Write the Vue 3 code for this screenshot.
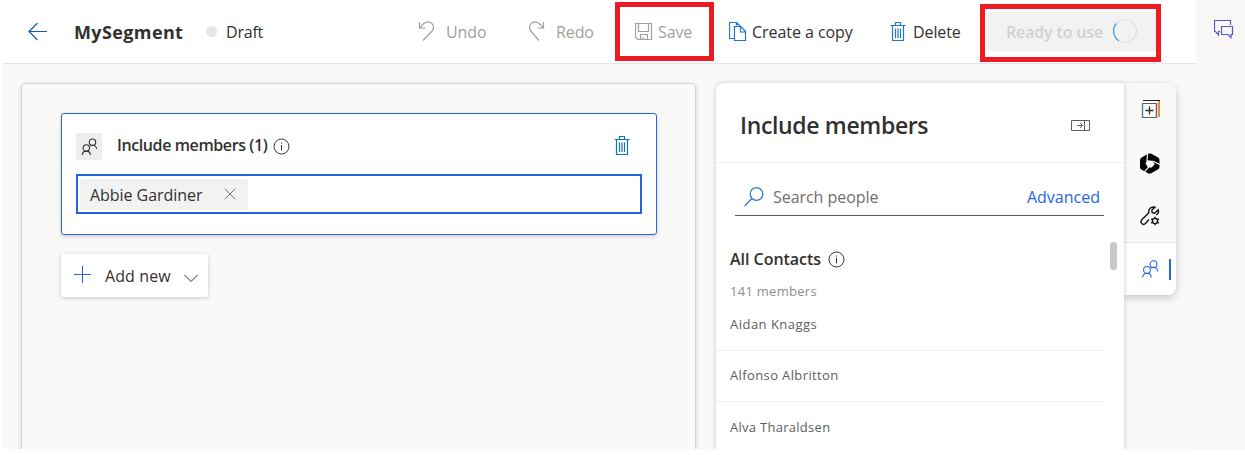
<script setup>
const contacts = ['Aidan Knaggs', 'Alfonso Albritton', 'Alva Tharaldsen']
</script>

<template>
  <div class="app">
    <div class="main">
      <header class="bar">
        <svg class="back" width="20" height="18" viewBox="0 0 20 18"><path d="M19 8.500H1M9.500 0 1 8.500l8.500 8.500" /></svg>
        <h1 class="t title">MySegment</h1>
        <span class="dot"></span>
        <span class="t draft">Draft</span>
        <button class="cmd undo off">
          <svg width="17" height="21" viewBox="0 0 17 21"><path d="M1.500 1v6h6M1.800 6.700 5 3.200C8.200.2 12 .3 14 2.700c2 2.300 1.900 5.300-.3 7.800L5 19.500" /></svg>
          <span class="t">Undo</span>
        </button>
        <button class="cmd redo off">
          <svg width="17" height="21" viewBox="0 0 17 21"><path d="M15.500 1v6h-6M15.200 6.700 12 3.200C8.800.2 5 .3 3 2.700c-2 2.300-1.900 5.300.3 7.800l7.700 9" /></svg>
          <span class="t">Redo</span>
        </button>
        <div class="mark save">
          <button class="cmd off">
            <svg width="18" height="18" viewBox="0 0 18 18"><path d="M.5.500h16v16H3L.5 14zM3.500.500v8h10v-8M5.500 16.500v-5h7v5M8 16.500v-2.500" /></svg>
            <span class="t">Save</span>
          </button>
        </div>
        <button class="cmd copy">
          <svg width="18" height="20" viewBox="0 0 18 20"><path d="M5.500 16.500h-5v-16h7l4 4M7.500.500v3M5.500 4.500h6.500l4.500 5v9h-11zM11.500 4.500v5.500h5" /></svg>
          <span class="t">Create a copy</span>
        </button>
        <button class="cmd del">
          <svg width="16" height="20" viewBox="0 0 16 20"><path d="M.5 3.500h15M5.500 3V.5h5V3M2.500 4v14.500h11V4M5.500 6.500v9.500M8 6.500v9.500M10.500 6.500v9.500" /></svg>
          <span class="t">Delete</span>
        </button>
        <div class="mark ready">
          <button class="readybtn">
            <span class="t">Ready to use</span>
            <svg width="26" height="26" viewBox="0 0 26 26"><circle cx="13" cy="13" r="11.500" stroke="#cfe3f5" /><path d="M4.200 5.700A11.500 11.500 0 0 0 6.800 22.700" stroke="#3a96dd" /></svg>
          </button>
        </div>
      </header>

      <div class="body">
        <section class="canvas">
          <div class="card">
            <div class="cardhead">
              <span class="people">
                <svg width="17" height="18" viewBox="0 0 17 18"><circle cx="11.500" cy="4.200" r="3.200" /><circle cx="5.300" cy="9.900" r="3.200" /><path d="M1.200 17c.2-2.600 1.700-3.900 4.100-3.900s3.900 1.300 4.100 3.900M9.200 7.900c2.600-1.500 5.900-.4 6.500 3" /></svg>
              </span>
              <span class="t heading">Include members (1)</span>
              <svg class="info" width="17" height="17" viewBox="0 0 17 17"><circle cx="8.500" cy="8.500" r="7.500" /><path d="M8.500 7v5.500M8.500 4.500v1.200" /></svg>
              <svg class="trash" width="16" height="20" viewBox="0 0 16 20"><path d="M.5 3.500h15M5.500 3V.5h5V3M2.500 4v14.500h11V4M5.500 6.500v9.500M8 6.500v9.500M10.500 6.500v9.500" /></svg>
            </div>
            <div class="field">
              <span class="chip">
                <span class="t">Abbie Gardiner</span>
                <svg width="12" height="12" viewBox="0 0 12 12"><path d="m.7.7 10.600 10.600M11.300.7.700 11.300" /></svg>
              </span>
            </div>
          </div>
          <button class="add">
            <svg class="plus" width="18" height="18" viewBox="0 0 18 18"><path d="M8.500 0v17M0 8.500h17" /></svg>
            <span class="t">Add new</span>
            <svg class="chev" width="14" height="9" viewBox="0 0 14 9"><path d="m.5 1 6.500 6.500L13.500 1" /></svg>
          </button>
        </section>

        <section class="panel">
          <div class="panelhead">
            <h2 class="t">Include members</h2>
            <svg width="20" height="12" viewBox="0 0 20 12"><path d="M.5.500h18v10H.5zM13.500.500v10M6 5.500h5M9 3l2.500 2.500L9 8" /></svg>
          </div>
          <div class="search">
            <svg width="20" height="20" viewBox="0 0 20 20"><circle cx="12.500" cy="7" r="6.300" /><path d="M8 11.500.6 19" /></svg>
            <span class="t ph">Search people</span>
            <a class="t adv">Advanced</a>
          </div>
          <div class="list">
            <div class="group">
              <span class="t">All Contacts</span>
              <svg class="info" width="17" height="17" viewBox="0 0 17 17"><circle cx="8.500" cy="8.500" r="7.500" /><path d="M8.500 7v5.500M8.500 4.500v1.200" /></svg>
              <i class="thumb"></i>
            </div>
            <div class="t count">141 members</div>
            <div v-for="(c, i) in contacts" :key="c" class="row" :class="'n' + i"><span class="t">{{ c }}</span></div>
          </div>
        </section>

        <nav class="tabs">
          <svg class="i1" width="20" height="20" viewBox="0 0 20 20"><path d="M1.500 3.500h14v14h-14z" stroke="#605e5c" /><path d="M1.500 3v14.500" stroke="#3d82bd" /><path d="M15.500 3v14.500" stroke="#80556e" /><path d="M2 .5h17" stroke="#222" /><path d="M18 1v16" stroke="#d9963c" stroke-width="2" /><path d="M8.500 6.500v8M4.500 10.500h8" stroke="#333" stroke-width="1.300" /></svg>
          <svg class="i2" width="20" height="21" viewBox="0 0 20 21"><path d="M8 .8Q9.700 0 11.400.8l6.700 3.700q1.400.9 1.400 2.500v7q0 1.400-1.300 2.200l-7 4q-1.600.9-3.200 0l-6.700-3.700Q0 15.600 0 14V7q0-1.500 1.300-2.300z" fill="#050505" /><path class="gap" d="M7.200 7.300 12.200 7.800l2.500 3.500-3 3.300H8L5.500 10.500z" /><path class="slit" d="M7.600.5 6.900 8.500M12.500 8 20 11.600M9 13.800 4.300 18.800" /></svg>
          <svg class="i3" width="20" height="20" viewBox="0 0 20 20"><path d="m1.500 14 7.300-7.300C8 3.200 11 .3 15 1.100L11.800 4.200l.4 2.500 2.500.5 3.400-3.400c.8 2-.1 4.200-1.800 5.100M1.500 14c-1.800 3.200 1.700 5.700 4 3.500l3.500-4" /><circle cx="15" cy="15" r="2.600" /><path d="M15 10.700v1.800M15 17.500v1.800M11.200 12.800l1.600 1M17.200 16.200l1.600 1M11.200 17.200l1.600-1M17.200 13.800l1.600-1" /></svg>
          <div class="current">
            <svg width="17" height="18" viewBox="0 0 17 18"><circle cx="11.500" cy="4.200" r="3.400" /><circle cx="5" cy="9.900" r="3.400" /><path d="M.7 17.500c.2-2.800 1.800-4.200 4.300-4.200s4.100 1.400 4.300 4.200M8.800 8c2.800-1.700 6.400-.5 7.100 3.500" /></svg>
            <i></i>
          </div>
        </nav>
      </div>
    </div>
    <aside class="rail">
      <svg width="20" height="19" viewBox="0 0 20 19"><path d="M6 11.500H4.500V15L1.500 11.500H.5V.5h16v4.500M7.500 6.500h11v8h-1.500v3L14 14.500H7.500z" /></svg>
    </aside>
  </div>
</template>

<style>
body { background: #fff; overflow: hidden; }
</style>

<style scoped>
* { box-sizing: border-box; }
.app { display: flex; width: 1242px; height: 449px; margin-left: 3px; overflow: hidden; font-family: "Open Sans", "Noto Sans", sans-serif; font-size: 16px; color: #323130; background: #faf9f8; }
.t { white-space: nowrap; line-height: 24px; }
svg { fill: none; stroke: currentColor; stroke-width: 1.200; flex: none; display: block; }
button { border: 0; background: none; padding: 0; font: inherit; color: inherit; display: flex; align-items: center; }
h1, h2 { margin: 0; }
.main { width: 1193px; flex: none; }
.bar { height: 64px; background: #fff; border-bottom: 1px solid #e6e5e4; display: flex; align-items: center; }
.back { margin-left: 25px; width: 20px; color: #0f5cad; }
.title { margin-left: 26px; width: 132px; font-size: 18px; font-weight: 700; letter-spacing: .38px; }
.dot { width: 11px; height: 11px; border-radius: 50%; background: #e6e6e6; }
.draft { margin-left: 9px; width: 192px; letter-spacing: -.2px; }
.cmd { flex: none; letter-spacing: -.1px; }
.cmd svg { color: #2277c9; }
.off, .cmd.off svg { color: #a19f9d; }
.undo { width: 110px; }
.undo svg, .redo svg { margin-right: 11px; margin-top: -1px; }
.redo { width: 87px; }
.mark { border: 5px solid #ed1c24; flex: none; }
.save { width: 99px; height: 59px; padding-left: 15px; display: flex; }
.save svg { margin-right: 5px; }
.copy { margin-left: 15px; width: 161px; letter-spacing: -.05px; }
.copy svg { margin-right: 5px; }
.del svg { margin-right: 7px; }
.del { width: 90px; }
.ready { width: 181px; height: 58px; margin-top: 3px; padding: 3px 0 6px 1px; }
.readybtn { width: 170px; height: 39px; background: #f3f2f2; padding-left: 20px; color: #d2d0ce; font-weight: 600; letter-spacing: -.15px; }
.readybtn .t { width: 106px; text-align: left; }
.readybtn svg { margin-top: -2px; }
.body { display: flex; padding: 19px 0 0 18px; height: 385px; }
.canvas { width: 675px; height: 400px; flex: none; border: 1px solid #d4d3d2; border-radius: 4px; box-shadow: 0 1px 4px rgba(0,0,0,.14); padding: 29px 0 0 39px; }
.card { width: 596px; height: 122px; background: #fff; border: 1px solid #2266e3; border-radius: 3px; box-shadow: 0 2px 4px rgba(0,0,0,.15); padding: 19px 14px 0; }
.cardhead { height: 27px; display: flex; align-items: center; }
.people { width: 26px; height: 27px; background: #eee; display: grid; place-items: center; }
.people svg, .current svg { stroke-width: 1.100; }
.heading { margin-left: 15px; width: 156px; font-weight: 600; letter-spacing: -.4px; margin-top: -3px; }
.cardhead .info { margin-top: -1px; }
.info { stroke-width: 1; }
.trash { margin-left: 324px; margin-top: -2px; color: #0f75b5; }
.field { margin-top: 14px; height: 40px; border: 2px solid #2266e3; padding: 3px 2px; }
.chip { display: flex; align-items: center; width: 168px; height: 31px; background: #f3f2f2; border-radius: 2px; padding-left: 10px; letter-spacing: -.05px; }
.chip .t { width: 134px; }
.chip svg { color: #797775; stroke-width: 1; margin-top: -1px; }
.add { width: 147px; height: 43px; margin-top: 19px; background: #fff; padding-left: 13px; border-radius: 2px; box-shadow: 0 1px 4px rgba(0,0,0,.2); }
.add .t { margin-left: 13px; width: 79px; text-align: left; letter-spacing: .1px; }
.plus { color: #2266e3; stroke-width: 1; margin-top: -2px; }
.chev { stroke-width: 1; margin-top: 6px; }
.panel { width: 408px; height: 400px; margin-left: 20px; background: #fff; border-radius: 8px 0 0 0; box-shadow: 0 0 5px rgba(0,0,0,.2); flex: none; z-index: 1; }
.panelhead { height: 80px; border-bottom: 1px solid #f0efee; padding: 4px 33px 0 24px; display: flex; align-items: center; justify-content: space-between; }
h2 { font-size: 23px; font-weight: 600; letter-spacing: -.35px; }
.panelhead svg { color: #605e5c; margin-top: 3px; stroke-width: 1; }
.search { margin: 16px 0 0 19px; width: 369px; height: 37px; border-bottom: 1px solid #605e5c; padding: 0 4px 0 9px; display: flex; align-items: center; }
.search svg { color: #2277d4; }
.ph { margin-left: 9px; flex: 1; color: #706e6c; letter-spacing: -.05px; }
.adv { color: #2266e3; letter-spacing: 0; }
.list { padding: 31px 0 0 14px; }
.group { height: 25px; display: flex; align-items: center; }
.group .t { width: 98px; margin-top: -2px; font-weight: 600; letter-spacing: -.03px; }
.group .info { margin-top: 0; }
.thumb { width: 7px; height: 28px; border-radius: 4px; background: #c8c8c8; margin: -7px 0 0 265px; flex: none; }
.count { height: 26px; margin-top: 7px; line-height: 25px; font-size: 13px; color: #8f8d8b; letter-spacing: .28px; }
.row { height: 51px; margin-left: -14px; padding: 12px 0 0 14px; width: 388px; border-bottom: 1px solid #f0efee; font-size: 13px; color: #605e5c; letter-spacing: .38px; }
.n0 { height: 46px; padding-top: 7px; letter-spacing: .48px; }
.n2 { padding-top: 13px; letter-spacing: .28px; }
.tabs { width: 52px; height: 212px; border-radius: 0 8px 8px 0; background: #faf9f8; box-shadow: 0 3px 9px rgba(0,0,0,.2); display: flex; flex-direction: column; overflow: hidden; flex: none; }
.i1 { margin: 17px 0 0 17px; }
.i2 { margin: 33px 0 0 16px; stroke: none; }
.gap { fill: #faf9f8; }
.slit { stroke: #faf9f8; stroke-width: 1.200; }
.i3 { margin: 32px 0 0 16px; color: #111; stroke-width: 1.400; }
.current { margin-top: 16px; height: 53px; border-top: 1px solid #e6e5e4; background: #fff; padding-left: 18px; display: flex; align-items: center; color: #2266e3; }
.current i { width: 2px; height: 21px; background: #2266e3; margin-left: 10px; }
.rail { flex: 1; background: #f8f7f6; padding: 20px 0 0 18px; color: #5559c4; }
</style>
